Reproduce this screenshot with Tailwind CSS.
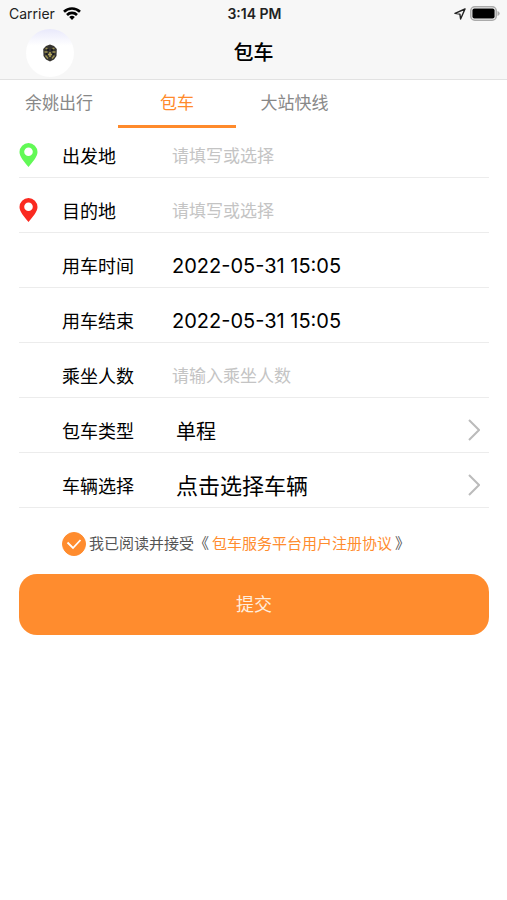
<!DOCTYPE html>
<html lang="zh-CN">
<head>
  <meta charset="UTF-8">
  <meta name="viewport" content="width=device-width, initial-scale=1.0">
  <title>包车</title>
  <script src="https://cdn.jsdelivr.net/npm/@tailwindcss/browser@4"></script>
  <style>
    body {
      font-family: Inter, 'Noto Sans CJK SC', sans-serif;
    }
  </style>
</head>
<body class="bg-white text-black">
<header class="bg-[#f7f7f7] border-b border-[#e2e2e2]">
  <!-- 状态栏 -->
  <div class="grid grid-cols-3 items-center h-[27px] pl-[9px] pr-[7px] text-[14px]">
    <div class="flex items-center gap-2 text-[#222]">
      <span>Carrier</span>
      <svg class="w-[18px] h-[13px]" viewBox="0 0 18 13" fill="none" stroke="#000" stroke-width="2.6">
        <path d="M1 4.8a11.4 11.4 0 0 1 16 0"/>
        <path d="M4 8a7 7 0 0 1 10 0"/>
        <path d="M9 13 6.2 10.1a4 4 0 0 1 5.6 0z" fill="#000" stroke="none"/>
      </svg>
    </div>
    <div class="text-center font-semibold text-[#222]">3:14 PM</div>
    <div class="flex items-center justify-end gap-1">
      <svg class="w-3 h-3" viewBox="0 0 12 12" fill="none" stroke="#222" stroke-width="1.4" stroke-linejoin="round">
        <path d="M11 1 1 5.4l4.900.7.700 4.900z"/>
      </svg>
      <svg class="w-[30px] h-[15px]" viewBox="0 0 30 15">
        <rect x="0.8" y="0.8" width="25.4" height="13.4" rx="4" fill="#f7f7f7" stroke="#aaa" stroke-width="1.6"/>
        <rect x="2.4" y="2.4" width="22.2" height="10.200" rx="2" fill="#000"/>
        <path d="M27.500 5v5q2.200-.8 2.200-2.500t-2.200-2.500z" fill="#aaa"/>
      </svg>
    </div>
  </div>
  <!-- 导航栏 -->
  <div class="grid grid-cols-3 items-center h-[52px]">
    <button type="button" aria-label="用户中心" class="ml-[26px] size-12 rounded-full bg-linear-to-b from-[#e9e9fb] via-white via-35% to-white flex items-center justify-center">
      <svg class="w-4 h-[18px]" viewBox="0 0 16 18">
        <path d="M8 .5 12 2l2.800 3-.3 7L12 15.500 8 17.500 4 15.500 1.500 12 1.200 5 4 2z" fill="#35332f"/>
        <path d="M3.500 4.500h2M10.500 4.500h2M2.500 8h3M10.500 8h3M3.500 11.500l2.500 3M12.500 11.500l-2.500 3" stroke="#9c9350" stroke-width="1.300"/>
        <path d="M8 8v5M6 10.500h4" stroke="#b5a95c" stroke-width="1.500"/>
        <path d="M5 6h2M9 6h2M4 10h1.500M10.500 10h1.500" stroke="#15151d" stroke-width="1.400"/>
      </svg>
    </button>
    <h1 class="text-center text-[20px] font-medium">包车</h1>
  </div>
</header>

<nav class="flex h-12 text-[17px]">
  <button type="button" class="w-[118px] text-[#888]">余姚出行</button>
  <button type="button" class="w-[118px] pt-[3px] border-b-3 border-[#ff8a2b] text-[#ff8a2b]">包车</button>
  <button type="button" class="w-[117px] text-[#888]">大站快线</button>
</nav>

<form class="pl-[19px] pr-[18px]">
  <div class="flex items-center pt-[17px] pb-2 border-b border-[#ececec]">
    <svg class="w-[19px] h-6 mr-6 -mt-1" viewBox="0 0 18 24">
      <path fill="#62f956" fill-rule="evenodd" d="M9 0a9 9 0 0 1 9 9c0 4.500-4.500 9.500-9 15C4.500 18.500 0 13.500 0 9a9 9 0 0 1 9-9zm0 4.500a4.300 4.300 0 1 0 0 8.600 4.300 4.300 0 0 0 0-8.600z"/>
    </svg>
    <label for="from" class="w-[110px] text-[18px] leading-6">出发地</label>
    <input id="from" type="text" placeholder="请填写或选择" class="flex-1 min-w-0 h-6 text-[17px] outline-none placeholder:text-[#c4c4c4]">
  </div>
  <div class="flex items-center pt-[22px] pb-2 border-b border-[#ececec]">
    <svg class="w-[19px] h-6 mr-6 -mt-1" viewBox="0 0 18 24">
      <path fill="#fa2a20" fill-rule="evenodd" d="M9 0a9 9 0 0 1 9 9c0 4.500-4.500 9.500-9 15C4.500 18.500 0 13.500 0 9a9 9 0 0 1 9-9zm0 4.500a4.300 4.300 0 1 0 0 8.600 4.300 4.300 0 0 0 0-8.600z"/>
    </svg>
    <label for="to" class="w-[110px] text-[18px] leading-6">目的地</label>
    <input id="to" type="text" placeholder="请填写或选择" class="flex-1 min-w-0 h-6 text-[17px] outline-none placeholder:text-[#c4c4c4]">
  </div>
  <div class="flex items-center pl-[43px] pt-[22px] pb-2 border-b border-[#ececec]">
    <label for="start" class="w-[110px] text-[18px] leading-6">用车时间</label>
    <input id="start" type="text" value="2022-05-31 15:05" class="flex-1 min-w-0 h-6 pb-0.5 text-[20px] outline-none">
  </div>
  <div class="flex items-center pl-[43px] pt-[22px] pb-2 border-b border-[#ececec]">
    <label for="end" class="w-[110px] text-[18px] leading-6">用车结束</label>
    <input id="end" type="text" value="2022-05-31 15:05" class="flex-1 min-w-0 h-6 pb-0.5 text-[20px] outline-none">
  </div>
  <div class="flex items-center pl-[43px] pt-[22px] pb-2 border-b border-[#ececec]">
    <label for="count" class="w-[110px] text-[18px] leading-6">乘坐人数</label>
    <input id="count" type="text" inputmode="numeric" placeholder="请输入乘坐人数" class="flex-1 min-w-0 h-6 text-[17px] outline-none placeholder:text-[#c4c4c4]">
  </div>
  <div class="flex items-center pl-[43px] pr-[9px] pt-[22px] pb-2 border-b border-[#ececec]">
    <label for="type" class="w-[114px] text-[18px] leading-6">包车类型</label>
    <select id="type" class="flex-1 min-w-0 h-6 text-[20px] leading-6 appearance-none outline-none">
      <option>单程</option>
    </select>
    <svg class="w-3 h-[22px] -mt-1" viewBox="0 0 12 22" fill="none" stroke="#bbb" stroke-width="2"><path d="M1 1l10 10L1 21"/></svg>
  </div>
  <div class="flex items-center pl-[43px] pr-[9px] pt-[22px] pb-2 border-b border-[#ececec]">
    <label for="car" class="w-[114px] text-[18px] leading-6">车辆选择</label>
    <button id="car" type="button" class="flex-1 h-6 pb-0.5 text-left text-[22px] leading-[22px]">点击选择车辆</button>
    <svg class="w-3 h-[22px] -mt-1" viewBox="0 0 12 22" fill="none" stroke="#bbb" stroke-width="2"><path d="M1 1l10 10L1 21"/></svg>
  </div>

  <div class="flex items-center pl-[43px] pt-6 text-[15px] leading-6 text-[#555]">
    <label class="flex items-center gap-[3px]">
      <span class="grid size-6 place-items-center">
        <input type="checkbox" checked class="peer col-start-1 row-start-1 size-6 appearance-none rounded-full border border-[#ff8c2e] checked:bg-[#ff8c2e]">
        <svg class="col-start-1 row-start-1 w-4 h-3 pointer-events-none invisible peer-checked:visible" viewBox="0 0 16 12" fill="none" stroke="#fff" stroke-width="1.800"><path d="M1.500 4.500 7 10l7.500-8"/></svg>
      </span>
      我已阅读并接受《
    </label>
    <a href="#" class="mx-[3px] text-[#ff8c2e]">包车服务平台用户注册协议</a>
    <span>》</span>
  </div>

  <button type="submit" class="mt-[18px] w-full h-[61px] rounded-[18px] bg-[#ff8c2e] text-[18px] text-[#ffeede]">提交</button>
</form>
</body>
</html>
